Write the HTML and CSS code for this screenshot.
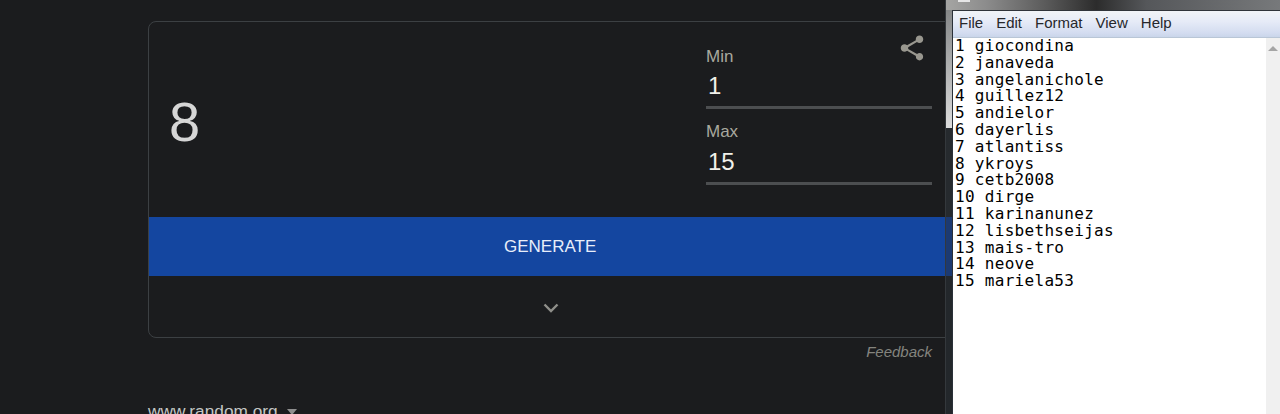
FILE: index.html
```html
<!DOCTYPE html>
<html lang="en">
<head>
  <meta charset="UTF-8">
  <title>Random number</title>
  <link rel="stylesheet" href="styles.css">
</head>
<body>
  <div class="page">
    <div class="card">
      <div class="top">
        <div class="result">8</div>
        <div class="fields">
          <div class="field">
            <div class="field-label">Min</div>
            <div class="field-value">1</div>
          </div>
          <div class="field">
            <div class="field-label">Max</div>
            <div class="field-value">15</div>
          </div>
        </div>
        <svg class="share" width="30" height="30" viewBox="0 0 24 24">
          <path fill="currentColor" d="M18 16.08c-.76 0-1.44.3-1.96.77L8.91 12.7c.05-.23.09-.46.09-.7s-.04-.47-.09-.7l7.05-4.11c.54.5 1.25.81 2.04.81 1.66 0 3-1.34 3-3s-1.34-3-3-3-3 1.34-3 3c0 .24.04.47.09.7L8.04 9.81C7.5 9.31 6.79 9 6 9c-1.66 0-3 1.34-3 3s1.34 3 3 3c.79 0 1.5-.31 2.04-.81l7.12 4.16c-.05.21-.08.43-.08.65 0 1.61 1.31 2.92 2.92 2.92s2.92-1.31 2.92-2.92-1.31-2.92-2.92-2.92z"/>
        </svg>
      </div>
      <div class="generate">GENERATE</div>
      <div class="more">
        <svg width="18" height="12" viewBox="0 0 18 12">
          <path fill="none" stroke="currentColor" stroke-width="2.4" d="M2.5 2.5 9 9l6.5-6.5"/>
        </svg>
      </div>
    </div>
    <div class="feedback">Feedback</div>
    <div class="source">www.random.org <span class="caret"></span></div>
  </div>

  <div class="notepad">
    <div class="titlebar"><span class="title-icon"></span></div>
    <div class="frame">
      <div class="menu">
        <span>File</span><span>Edit</span><span>Format</span><span>View</span><span>Help</span>
      </div>
      <div class="editor">
        <pre class="text">1 giocondina
2 janaveda
3 angelanichole
4 guillez12
5 andielor
6 dayerlis
7 atlantiss
8 ykroys
9 cetb2008
10 dirge
11 karinanunez
12 lisbethseijas
13 mais-tro
14 neove
15 mariela53</pre>
        <div class="scrollbar"><span class="arrow"></span></div>
      </div>
    </div>
  </div>
</body>
</html>
```

FILE: styles.css
```css
html, body { margin: 0; height: 100%; }
body {
  display: flex;
  height: 414px;
  overflow: hidden;
  background: #1b1c1e;
  font-family: "Liberation Sans", Arial, sans-serif;
}

.page {
  width: 945px;
  flex: none;
  padding: 21px 0 0 148px;
  box-sizing: border-box;
  overflow: hidden;
}

/* card runs under the notepad window */
.card {
  width: 810px;
  height: 317px;
  box-sizing: border-box;
  border: 1px solid #3c4043;
  border-radius: 8px;
  overflow: hidden;
}
.top {
  display: flex;
  justify-content: space-between;
  height: 195px;
  position: relative;
}
.result {
  font-size: 56px;
  line-height: 64px;
  color: #d6d6d6;
  padding: 68px 0 0 20px;
}
.fields {
  width: 226px;
  margin-right: 25px;
  padding-top: 25px;
}
.field { height: 76px; }
.field-label {
  font-size: 17px;
  line-height: 20px;
  color: #a9a99f;
}
.field + .field .field-label { margin: -1px 0 1px; }
.field-value {
  font-size: 24px;
  line-height: 32px;
  padding: 3px 0 0 2px;
  height: 36px;
  color: #f0f0ea;
  border-bottom: 3px solid #4c4e50;
}
.share {
  position: absolute;
  right: 30px;
  top: 11px;
  color: #99978f;
}
.generate {
  height: 59px;
  background: #1446a0;
  color: #e8eefa;
  font-size: 17px;
  line-height: 59px;
  padding-left: 355px;
}
.more {
  display: flex;
  padding: 26px 0 0 393px;
  color: #8f8f8a;
}

.feedback {
  width: 784px;
  margin-top: 6px;
  font-size: 15px;
  line-height: 16px;
  font-style: italic;
  text-align: right;
  color: #84847e;
}
.source {
  margin-top: 41px;
  font-size: 17.3px;
  line-height: 20px;
  color: #c4c7c5;
}
.caret {
  display: inline-block;
  margin-left: 5px;
  border: 5px solid transparent;
  border-top: 6px solid #8f8f8f;
  border-bottom: 0;
  vertical-align: middle;
}

/* aero glass edge, picks up what lies behind the window */
.notepad {
  flex: 1;
  display: flex;
  flex-direction: column;
  border-left: 1px solid #34383c;
  background: linear-gradient(#7d7f80, #dcdcdc 128px, #262a2e 128px, #262a2e 217px, #1c3a72 217px, #1c3a72 276px, #23272b 276px);
}
.titlebar {
  height: 10px;
  flex: none;
  padding-left: 12px;
  background: linear-gradient(90deg, #a5a5a3, #8c8c8c 12%, #5a5a5a 30%, #2c2c2c 45%, #55575a 60%, #77797b);
}
.title-icon {
  display: block;
  width: 12px;
  height: 2px;
  background: #e6e6e6;
}
.frame {
  flex: 1;
  display: flex;
  flex-direction: column;
  margin-left: 6px;
  border-left: 1px solid #2a3038;
  border-top: 1px solid #30343a;
  min-height: 0;
}
.menu {
  height: 26px;
  flex: none;
  display: flex;
  gap: 13px;
  padding-left: 6px;
  font-size: 15px;
  line-height: 24px;
  color: #26272b;
  background: linear-gradient(#f1f4f7, #e6ebf7 40%, #d3dcf0 85%, #c9d5ea);
  border-bottom: 1px solid #b9c6d6;
}
.editor {
  flex: 1;
  display: flex;
  background: #fff;
  min-height: 0;
}
.text {
  flex: 1;
  margin: 0;
  padding: 0 0 0 2px;
  font-family: "DejaVu Sans Mono", monospace;
  font-size: 16px;
  letter-spacing: .3px;
  line-height: 16.8px;
  color: #000;
}
.scrollbar {
  width: 14px;
  flex: none;
  background: #f0f0f0;
  display: flex;
  justify-content: center;
  padding-top: 8px;
  box-sizing: border-box;
}
.arrow {
  width: 0;
  height: 0;
  border: 5px solid transparent;
  border-bottom: 5px solid #a5a5a5;
  border-top: 0;
}
```
